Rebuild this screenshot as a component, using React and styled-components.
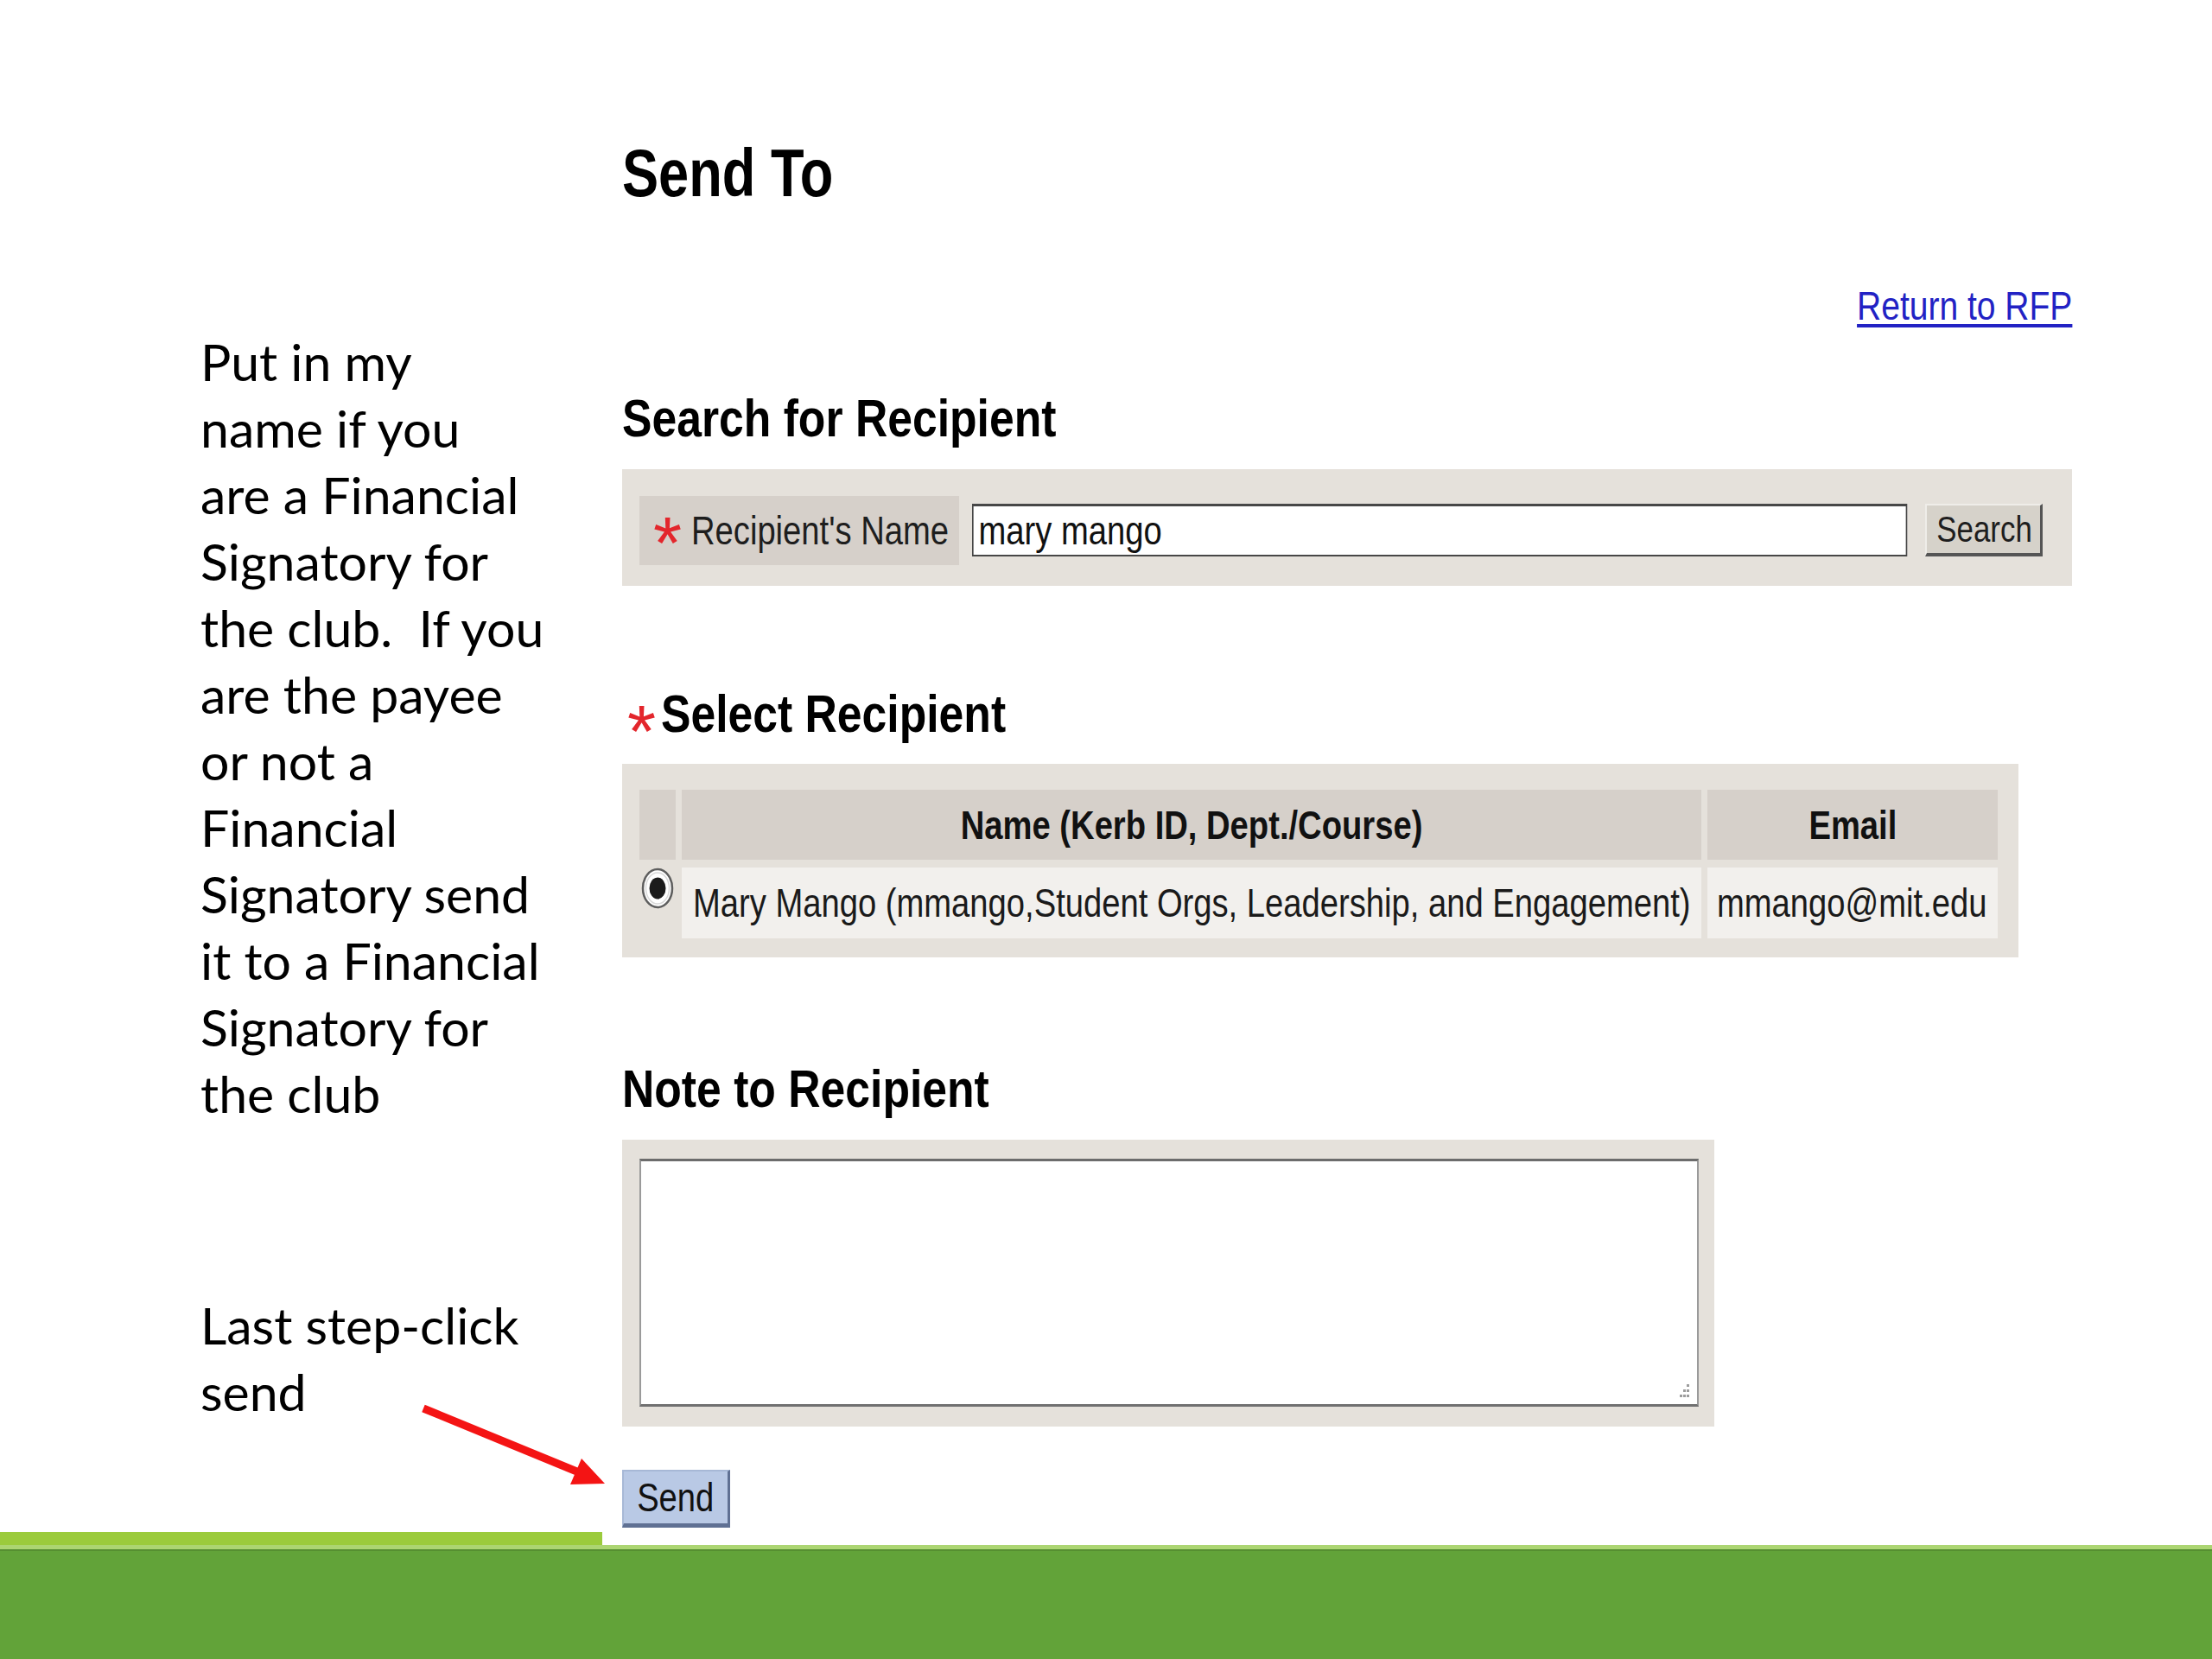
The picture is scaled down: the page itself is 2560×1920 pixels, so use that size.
import React from "react";
import styled, { createGlobalStyle } from "styled-components";

const sans = `"Liberation Sans", Arial, Helvetica, sans-serif`;

const GlobalStyle = createGlobalStyle`
  html, body {
    margin: 0;
    padding: 0;
    background: #fff;
  }
`;

// the pasted screenshot is squeezed sideways, so its texts are too
const Squeeze = styled.span`
  display: inline-block;
  white-space: nowrap;
  transform: scaleX(${(p) => p.$x || 0.83});
  transform-origin: ${(p) => p.$origin || "left"} center;
`;

// whole slide
const Page = styled.div`
  position: relative;
  width: 2560px;
  height: 1920px;
  display: flex;
  flex-direction: column;
  background: #fff;
  overflow: hidden;
`;

const Main = styled.div`
  flex: 1;
  display: flex;
`;

// 1. left annotation text
const Notes = styled.div`
  width: 720px;
  box-sizing: border-box;
  padding: 380px 0 0 232px;
  font-family: Lato, "Open Sans", sans-serif;
  font-size: 59px;
  line-height: 77px;
  color: #000;
`;

const NoteBlock = styled.div`
  & + & {
    margin-top: 191px;
  }
`;

const NoteLine = styled.div`
  white-space: pre;
`;

// 2. the pasted form
const Form = styled.div`
  width: 1678px;
  padding-top: 162px;
  display: flex;
  flex-direction: column;
  align-items: flex-start;
  font-family: ${sans};
  color: #000;
`;

const Title = styled.h1`
  margin: 0;
  font-size: 77px;
  line-height: 1;
  font-weight: bold;
`;

const LinkRow = styled.div`
  align-self: stretch;
  display: flex;
  justify-content: flex-end;
  margin-top: 91px;
`;

const ReturnLink = styled.a`
  display: inline-block;
  font-size: 47px;
  line-height: 1;
  color: #2222c4;
  text-decoration: underline;
  text-underline-offset: 5px;
  white-space: nowrap;
  transform: scaleX(0.83);
  transform-origin: right center;
  cursor: pointer;
`;

const SectionTitle = styled.h2`
  margin: ${(p) => p.$top}px 0 0;
  font-size: 61.5px;
  line-height: 1;
  font-weight: bold;
  white-space: nowrap;
`;

const Star = styled.span`
  font-family: ${sans};
  font-weight: normal;
  font-size: 85px;
  line-height: 0;
  color: #e3262c;
  vertical-align: ${(p) => p.$drop}px;
  margin: 0 ${(p) => p.$right}px 0 ${(p) => p.$left}px;
`;

const Panel = styled.div`
  margin-top: 28px;
  background: #e5e1db;
`;

const SearchPanel = styled(Panel)`
  align-self: stretch;
  display: flex;
  align-items: center;
  padding: 31px 34px 24px 20px;
`;

const FieldLabel = styled.div`
  width: 370px;
  height: 80px;
  box-sizing: border-box;
  padding-left: 16px;
  background: #d6d0ca;
  font-size: 46px;
  line-height: 80px;
  color: #1e1e1e;
  white-space: nowrap;
`;

const InputWrap = styled.div`
  flex: 1;
  margin-left: 15px;
  height: 61px;
`;

const TextInput = styled.input`
  width: calc(100% / 0.83);
  height: 61px;
  box-sizing: border-box;
  margin: 0;
  padding: 0 7px;
  border: 2px solid #474747;
  border-top-width: 3px;
  background: #fff;
  font-family: ${sans};
  font-size: 46px;
  color: #111;
  outline: none;
  transform: scaleX(0.83);
  transform-origin: left center;
`;

const GrayButton = styled.button`
  margin-left: 21px;
  width: 136px;
  height: 61px;
  padding: 0;
  box-sizing: border-box;
  background: #d6d2ca;
  border: 2px solid;
  border-bottom-width: 4px;
  border-right-width: 3px;
  border-color: #efede9 #555 #555 #efede9;
  font-family: ${sans};
  font-size: 42px;
  color: #1e1e1e;
`;

const TablePanel = styled(Panel)`
  display: grid;
  grid-template-columns: 42px 1180px 336px;
  column-gap: 7px;
  row-gap: 9px;
  padding: 30px 24px 22px 20px;
`;

const HeadCell = styled.div`
  height: 81px;
  background: #d6d0ca;
  display: flex;
  align-items: center;
  justify-content: center;
  font-size: 46px;
  font-weight: bold;
  color: #111;
`;

const Cell = styled.div`
  height: 82px;
  box-sizing: border-box;
  padding-left: ${(p) => p.$pad}px;
  background: ${(p) => (p.$plain ? "transparent" : "#f2f0ed")};
  display: flex;
  align-items: ${(p) => (p.$plain ? "flex-start" : "center")};
  font-size: 46px;
  color: #1a1a1a;
  overflow: visible;
`;

const NotePanel = styled(Panel)`
  width: 1264px;
  box-sizing: border-box;
  padding: 22px 18px 23px 20px;
`;

const NoteBox = styled.div`
  position: relative;
  height: 287px;
`;

const NoteArea = styled.textarea`
  display: block;
  width: 100%;
  height: 100%;
  box-sizing: border-box;
  margin: 0;
  border: 2px solid #9a9a9a;
  border-top: 3px solid #6c6c6c;
  border-bottom: 3px solid #707070;
  background: #fff;
  resize: none;
  outline: none;
`;

const Grip = styled.svg`
  position: absolute;
  right: 10px;
  bottom: 10px;
`;

const SendButton = styled.button`
  margin-top: 50px;
  width: 125px;
  height: 67px;
  padding: 0;
  box-sizing: border-box;
  background: #b9c9e5;
  border: 2px solid;
  border-bottom-width: 5px;
  border-right-width: 3px;
  border-color: #a7b8d6 #5f7093 #5f7093 #a7b8d6;
  font-family: ${sans};
  font-size: 46px;
  color: #111;
`;

// 3. red pointer arrow drawn over the slide
const Arrow = styled.svg`
  position: absolute;
  left: 480px;
  top: 1620px;
`;

// 4. green band at the bottom of the slide
const Footer = styled.footer`
  height: 147px;
  display: flex;
  flex-direction: column;
`;

const FooterTab = styled.div`
  width: 697px;
  height: 15px;
  background: #9bcb3c;
`;

const FooterBand = styled.div`
  flex: 1;
  background: #62a339;
  border-top: 5px solid #acd572;
  box-shadow: inset 0 2px 0 #568f31;
`;

const noteLines = [
  "Put in my",
  "name if you",
  "are a Financial",
  "Signatory for",
  "the club.  If you",
  "are the payee",
  "or not a",
  "Financial",
  "Signatory send",
  "it to a Financial",
  "Signatory for",
  "the club",
];

const Radio = () => (
  <svg width="38" height="48" viewBox="0 0 38 48">
    <ellipse cx="19" cy="24" rx="17" ry="22" fill="#fff" stroke="#5e5e5e" strokeWidth="2.5" />
    <ellipse cx="19" cy="24" rx="13.5" ry="18" fill="none" stroke="#d9d9d9" strokeWidth="1.5" />
    <ellipse cx="19" cy="24" rx="9.5" ry="12.5" fill="#1b1b1b" />
  </svg>
);

export default function App() {
  return (
    <>
      <GlobalStyle />
      <Page>
        <Main>
          <Notes>
            <NoteBlock>
              {noteLines.map((l, i) => (
                <NoteLine key={i}>{l}</NoteLine>
              ))}
            </NoteBlock>
            <NoteBlock>
              <NoteLine>Last step-click</NoteLine>
              <NoteLine>send</NoteLine>
            </NoteBlock>
          </Notes>

          <Form>
            <Title>
              <Squeeze $x={0.82}>Send To</Squeeze>
            </Title>
            <LinkRow>
              <ReturnLink>Return to RFP</ReturnLink>
            </LinkRow>

            <SectionTitle $top={76}>
              <Squeeze $x={0.84}>Search for Recipient</Squeeze>
            </SectionTitle>
            <SearchPanel>
              <FieldLabel>
                <Star $drop={-28} $left={0} $right={11}>*</Star>
                <Squeeze>Recipient's Name</Squeeze>
              </FieldLabel>
              <InputWrap>
                <TextInput defaultValue="mary mango" />
              </InputWrap>
              <GrayButton>
                <Squeeze $origin="center">Search</Squeeze>
              </GrayButton>
            </SearchPanel>

            <SectionTitle $top={117}>
              <Star $drop={-29} $left={6} $right={6}>*</Star>
              <Squeeze $x={0.84}>Select Recipient</Squeeze>
            </SectionTitle>
            <TablePanel>
              <HeadCell />
              <HeadCell>
                <Squeeze $origin="center">Name (Kerb ID, Dept./Course)</Squeeze>
              </HeadCell>
              <HeadCell>
                <Squeeze $origin="center">Email</Squeeze>
              </HeadCell>
              <Cell $plain $pad={2}>
                <Radio />
              </Cell>
              <Cell $pad={13}>
                <Squeeze>Mary Mango (mmango,Student Orgs, Leadership, and Engagement)</Squeeze>
              </Cell>
              <Cell $pad={11}>
                <Squeeze>mmango@mit.edu</Squeeze>
              </Cell>
            </TablePanel>

            <SectionTitle $top={121}>
              <Squeeze $x={0.84}>Note to Recipient</Squeeze>
            </SectionTitle>
            <NotePanel>
              <NoteBox>
                <NoteArea />
                <Grip width="16" height="16" viewBox="0 0 16 16">
                  <rect x="12" y="0" width="3" height="3" fill="#9c9c9c" />
                  <rect x="8" y="6" width="3" height="3" fill="#9c9c9c" />
                  <rect x="12" y="6" width="3" height="3" fill="#9c9c9c" />
                  <rect x="4" y="12" width="3" height="3" fill="#9c9c9c" />
                  <rect x="8" y="12" width="3" height="3" fill="#9c9c9c" />
                  <rect x="12" y="12" width="3" height="3" fill="#9c9c9c" />
                </Grip>
              </NoteBox>
            </NotePanel>

            <SendButton>
              <Squeeze $origin="center">Send</Squeeze>
            </SendButton>
          </Form>
        </Main>

        <Footer>
          <FooterTab />
          <FooterBand />
        </Footer>

        <Arrow width="240" height="110" viewBox="0 0 240 110">
          <line x1="10" y1="10" x2="190" y2="84" stroke="#f41414" strokeWidth="9" />
          <polygon points="220,97 180,98 193,68" fill="#f41414" />
        </Arrow>
      </Page>
    </>
  );
}
